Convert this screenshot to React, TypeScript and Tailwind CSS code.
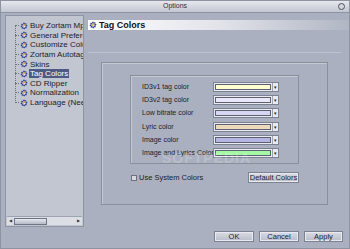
import type { ReactNode } from 'react'

const font = { fontFamily: '"Liberation Sans", Arial, sans-serif' }

const treeItems = [
  'Buy Zortam Mp3 Media Studio',
  'General Preferences',
  'Customize Columns',
  'Zortam Autotag',
  'Skins',
  'Tag Colors',
  'CD Ripper',
  'Normalization',
  'Language (Needs restart)',
]

const colorRows = [
  { label: 'ID3v1 tag color', color: '#ffffcf', gap: false },
  { label: 'ID3v2 tag color', color: '#e8e8fa', gap: false },
  { label: 'Low bitrate color', color: '#d6d6f2', gap: false },
  { label: 'Lyric color', color: '#efd9bd', gap: true },
  { label: 'Image color', color: '#b6b6e4', gap: false },
  { label: 'Image and Lyrics Color', color: '#a4f8a4', gap: false },
]

// little Zortam gear icon
function Gear() {
  return (
    <svg width="8" height="8" viewBox="0 0 8 8" className="shrink-0">
      <path d="M4 0.3 L4.8 1.6 L6.4 1.2 L6.3 2.8 L7.7 3.6 L6.4 4.6 L6.8 6.2 L5.2 6.2 L4.3 7.6 L3.3 6.4 L1.7 6.8 L1.8 5.2 L0.3 4.4 L1.6 3.4 L1.2 1.8 L2.8 1.9 Z" fill="#2f3f8f" />
      <circle cx="4" cy="4" r="1.7" fill="#e7e9ef" />
      <path d="M2.6 4.6 L5.6 2.4" stroke="#d89a1c" strokeWidth="1.1" />
    </svg>
  )
}

function Btn({ children, w }: { children: ReactNode; w: string }) {
  return (
    <div
      className={`${w} h-[11px] flex items-center justify-center whitespace-nowrap border border-[#7d8292] bg-gradient-to-b from-[#d9dce4] to-[#b9bdc9] text-[7.5px] text-[#1e2230] shadow-[inset_0_0_0_1px_#e8eaf0]`}
    >
      {children}
    </div>
  )
}

export default function App() {
  return (
    <div className="w-[350px] h-[249px] bg-[#aab0bf] flex flex-col overflow-hidden border border-[#8e93a2]" style={font}>
      {/* title bar */}
      <div className="h-[12px] shrink-0 relative flex items-center justify-center bg-gradient-to-b from-[#e6e8ee] to-[#c3c7d2] border-b border-[#8e93a2]">
        <span className="text-[7px] text-[#2a2e3a]">Options</span>
        <div className="absolute right-[4px] top-[2px] w-[7px] h-[7px] rounded-full border border-[#4a4f5e] bg-[#d4d7df]" />
      </div>

      <div className="flex flex-1 min-h-0">
        {/* left tree */}
        <div className="ml-[4px] mt-[2px] w-[79px] h-[212px] shrink-0 bg-[#c2c6d1] border border-[#8f94a3] flex flex-col overflow-hidden">
          <div className="flex-1 pt-[5px] relative overflow-hidden">
            <div className="absolute left-[9px] top-[10px] h-[77px] border-l border-dotted border-[#6c7080]" />
            {treeItems.map((t) => (
              <div key={t} className="h-[9.6px] flex items-center pl-[9px] whitespace-nowrap">
                <div className="w-[4px] shrink-0 border-t border-dotted border-[#6c7080] mr-[1px]" />
                <Gear />
                <span
                  className={`ml-[1px] text-[8px] leading-[9px] px-[1px] ${
                    t === 'Tag Colors' ? 'bg-[#4d5a86] text-white' : 'text-[#1a1d28]'
                  }`}
                >
                  {t}
                </span>
              </div>
            ))}
          </div>
          {/* horizontal scrollbar */}
          <div className="h-[9px] mx-[1px] mb-[1px] flex items-center bg-[#dcdee5] border-t border-[#9ea3b1]">
            <div className="w-[7px] h-full flex items-center justify-center text-[4px] text-[#333]">◀</div>
            <div className="w-[33px] h-[7px] border border-[#6f7486] bg-gradient-to-b from-[#e7e9ef] to-[#b5b9c6]" />
            <div className="flex-1" />
            <div className="w-[7px] h-full flex items-center justify-center text-[4px] text-[#333]">▶</div>
          </div>
        </div>

        {/* right side */}
        <div className="flex-1 flex flex-col ml-[4px] mt-[7px]">
          <div className="h-[10px] flex items-center gap-[2px] pl-[1px] bg-gradient-to-r from-white via-[#e2e4ea] to-[#b1b6c4]">
            <Gear />
            <span className="text-[9px] font-bold text-[#101218] leading-none">Tag Colors</span>
          </div>
          <div className="mt-[22px] mr-[8px] border-t border-[#bfc3cd]" />

          {/* outer group */}
          <div className="ml-[13px] mr-[21px] mt-[9px] h-[143px] border border-[#8a8f9e] shadow-[inset_1px_1px_0_#c5c9d3] flex flex-col relative">
            {/* inner group */}
            <div className="ml-[28px] mr-[28px] mt-[12px] h-[89px] border border-[#8a8f9e] shadow-[inset_1px_1px_0_#c5c9d3] flex flex-col pt-[6px]">
              {colorRows.map((r) => (
                <div key={r.label} className={`flex items-center h-[10px] mb-[3px] ${r.gap ? 'mt-[1px]' : ''}`}>
                  <span className="w-[82px] pl-[11px] text-[7px] text-[#1a1d28] whitespace-nowrap">{r.label}</span>
                  <div className="w-[66px] h-[10px] flex border border-[#7d8292] bg-[#e9ebf0]">
                    <div className="flex-1 m-[1px] border border-[#5d6272]" style={{ backgroundColor: r.color }} />
                    <div className="w-[6px] border-l border-[#9ea3b1] flex items-center justify-center text-[5px] leading-none text-[#222]">▾</div>
                  </div>
                </div>
              ))}
            </div>
            {/* watermark */}
            <div className="absolute left-[60px] top-[88px] text-[14px] font-bold tracking-[1px] text-white/20 leading-none pointer-events-none">SOFTPEDIA</div>

            <div className="flex items-center justify-between ml-[29px] mr-[28px] mt-[8px]">
              <div className="flex items-center gap-[2px]">
                <div className="w-[6px] h-[6px] border border-[#6c7080] bg-[#d5d8e0]" />
                <span className="text-[7.5px] text-[#1a1d28]">Use System Colors</span>
              </div>
              <Btn w="w-[51px]">Default Colors</Btn>
            </div>
          </div>

          {/* bottom buttons */}
          <div className="flex justify-end gap-[5px] mr-[6px] mt-[26px]">
            <Btn w="w-[40px]">OK</Btn>
            <Btn w="w-[40px]">Cancel</Btn>
            <Btn w="w-[39px]">Apply</Btn>
          </div>
        </div>
      </div>
    </div>
  )
}
